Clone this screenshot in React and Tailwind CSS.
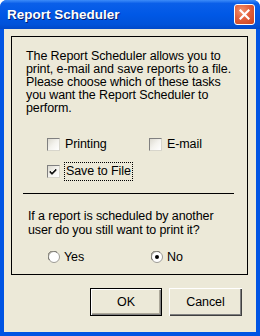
import React from "react";

function CheckBox({ checked }) {
  return (
    <div className="w-[13px] h-[13px] border border-t-[#808080] border-l-[#808080] border-b-[#d8d6cc] border-r-[#d8d6cc] bg-[linear-gradient(135deg,#dcdad0_0%,#f4f3ee_50%,#ffffff_100%)] flex items-center justify-center shrink-0">
      {checked && (
        <svg width="9" height="9" viewBox="0 0 9 9">
          <path d="M1 4 L3 6 L7 2 L7 3.5 L3 7.5 L1 5.5 Z" fill="#000" stroke="#000" strokeWidth="0.6" />
        </svg>
      )}
    </div>
  );
}

function Radio({ checked }) {
  return (
    <svg width="12" height="12" viewBox="0 0 12 12" className="shrink-0">
      <circle cx="6" cy="6" r="5.5" fill="#fff" stroke="#9c9a94" strokeWidth="1" />
      <path d="M1.5 9 A5 5 0 0 1 9 1.5" fill="none" stroke="#6f6d66" strokeWidth="1" />
      {checked && <circle cx="6" cy="6" r="2" fill="#000" />}
    </svg>
  );
}

export default function App() {
  return (
    <div className="w-[260px] h-[336px] bg-[#0054e3] rounded-t-[7px] overflow-hidden flex flex-col font-['Liberation_Sans',Arial,sans-serif] text-[12.5px] tracking-[-0.1px] text-black">
      <div className="h-[29px] shrink-0 bg-[linear-gradient(180deg,#3d8cf9_0%,#0a5fe9_12%,#0058e6_50%,#0052d9_85%,#0048c8_100%)] flex items-center pl-[7px] pr-[5px] relative">
        <span className="text-white font-bold text-[13.5px] tracking-normal leading-none [text-shadow:1px_1px_0_#0a1e6e]">Report Scheduler</span>
        <div className="ml-auto w-[21px] h-[21px] rounded-[3px] border border-white bg-[radial-gradient(circle_at_35%_30%,#f2936e_0%,#e2603d_45%,#c7421e_100%)] flex items-center justify-center">
          <svg width="11" height="11" viewBox="0 0 11 11">
            <path d="M1.5 1.5 L9.5 9.5 M9.5 1.5 L1.5 9.5" stroke="#fff" strokeWidth="2.2" strokeLinecap="square" />
          </svg>
        </div>
      </div>
      <div className="flex-1 mx-[4px] mb-[4px] bg-[#ece9d8] pt-[7px] pl-[7px] pr-[8px] flex flex-col">
        <div className="h-[239px] border border-black pt-[13px] pl-[14px] flex flex-col">
          <div className="leading-[13px] whitespace-nowrap flex flex-col">
            <span>The Report Scheduler allows you to</span>
            <span>print, e-mail and save reports to a file.</span>
            <span>Please choose which of these tasks</span>
            <span>you want the Report Scheduler to</span>
            <span>perform.</span>
          </div>
          <div className="mt-[23px] ml-[21px] flex items-center h-[13px]">
            <div className="flex items-center w-[102px]">
              <CheckBox />
              <span className="ml-[5px] leading-none">Printing</span>
            </div>
            <div className="flex items-center">
              <CheckBox />
              <span className="ml-[5px] leading-none">E-mail</span>
            </div>
          </div>
          <div className="mt-[14px] ml-[21px] flex items-center h-[13px]">
            <CheckBox checked />
            <span className="ml-[4px] leading-none border border-dotted border-black px-[1px] py-[2px]">Save to File</span>
          </div>
          <div className="mt-[15px] ml-[-3px] w-[211px] h-px bg-black" />
          <div className="mt-[15px] ml-[2px] leading-[14px] whitespace-nowrap flex flex-col">
            <span>If a report is scheduled by another</span>
            <span>user do you still want to print it?</span>
          </div>
          <div className="mt-[14px] ml-[22px] flex items-center h-[12px]">
            <div className="flex items-center w-[103px]">
              <Radio />
              <span className="ml-[4px] leading-none">Yes</span>
            </div>
            <div className="flex items-center">
              <Radio checked />
              <span className="ml-[4px] leading-none">No</span>
            </div>
          </div>
        </div>
        <div className="mt-[13px] flex justify-end gap-[7px] pr-[6px]">
          <button className="w-[72px] h-[28px] border border-black bg-[#ece9d8] shadow-[inset_1px_1px_0_#fff,inset_-1px_-1px_0_#808080,inset_-2px_-2px_0_#aca899] flex items-center justify-center leading-none">
            OK
          </button>
          <button className="w-[73px] h-[28px] bg-[#ece9d8] shadow-[inset_1px_1px_0_#fff,inset_-1px_-1px_0_#404040,inset_-2px_-2px_0_#808080] flex items-center justify-center leading-none">
            Cancel
          </button>
        </div>
      </div>
    </div>
  );
}
